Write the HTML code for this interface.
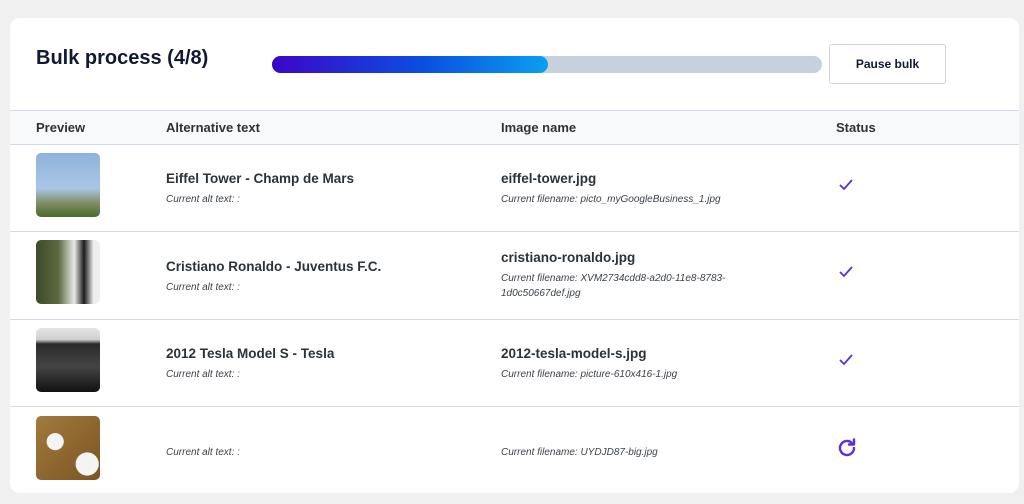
<!DOCTYPE html>
<html><head><style>
body{margin:0;width:1024px;height:504px;background:#f0f0f1;font-family:"Liberation Sans",Arial,sans-serif;position:relative;overflow:hidden;color:#1d2327}
.card{position:absolute;left:10px;top:18px;width:1009px;height:475px;background:#fff;border-radius:10px;overflow:hidden}
.a{position:absolute}
h1{position:absolute;left:26px;top:29px;margin:0;font-size:20px;font-weight:bold;color:#111a33}
.bar{left:262px;top:38px;width:550px;height:17px;border-radius:9px;background:#c7d0dd}
.fill{left:262px;top:38px;width:276px;height:17px;border-radius:9px;background:linear-gradient(90deg,#3b06c9,#0a4fe0 55%,#0aa0ee)}
.btn{left:819px;top:26px;width:115px;height:38px;border:1px solid #cfd6e1;border-radius:3px;font-size:12px;font-weight:bold;text-align:center;line-height:38px;color:#111a33}
.hl{left:0;width:1009px;height:1px;background:#d3dbea}
.head{left:0;top:92px;width:1009px;height:34px;background:#f8f9fb}
.th{top:102px;font-size:13px;font-weight:bold;color:#2c3338}
.t{font-size:13.5px;font-weight:bold;color:#2c3338}
.s{font-size:10px;font-style:italic;color:#3c434a;line-height:15px}
.img{left:26px;width:64px;height:64px;border-radius:5px}
</style></head><body>
<div class="card">
<h1>Bulk process (4/8)</h1>
<div class="a bar"></div><div class="a fill"></div>
<div class="a btn">Pause bulk</div>
<div class="a head"></div>
<div class="a hl" style="top:92px"></div>
<div class="a hl" style="top:126px"></div>
<div class="a th" style="left:26px">Preview</div>
<div class="a th" style="left:156px">Alternative text</div>
<div class="a th" style="left:491px">Image name</div>
<div class="a th" style="left:826px">Status</div>

<div class="a img" style="top:135px;background:linear-gradient(180deg,#8fb3dc 0%,#aac6e6 55%,#7c8a5a 80%,#4d6a2e 100%)"></div>
<div class="a t" style="left:156px;top:153px">Eiffel Tower - Champ de Mars</div>
<div class="a s" style="left:156px;top:174px">Current alt text: :</div>
<div class="a t" style="left:491px;top:153px">eiffel-tower.jpg</div>
<div class="a s" style="left:491px;top:174px">Current filename: picto_myGoogleBusiness_1.jpg</div>
<svg class="a" style="left:828px;top:160px" width="16" height="14" viewBox="0 0 16 14"><path d="M2 7l4 4 8-9" fill="none" stroke="#5b2ee0" stroke-width="1.8"/></svg>
<div class="a hl" style="top:213px"></div>

<div class="a img" style="top:222px;background:linear-gradient(90deg,#3e4a2a 0%,#5b6a3e 35%,#e8e8e8 60%,#1a1a1a 75%,#eee 90%)"></div>
<div class="a t" style="left:156px;top:241px">Cristiano Ronaldo - Juventus F.C.</div>
<div class="a s" style="left:156px;top:262px">Current alt text: :</div>
<div class="a t" style="left:491px;top:232px">cristiano-ronaldo.jpg</div>
<div class="a s" style="left:491px;top:253px">Current filename: XVM2734cdd8-a2d0-11e8-8783-<br>1d0c50667def.jpg</div>
<svg class="a" style="left:828px;top:247px" width="16" height="14" viewBox="0 0 16 14"><path d="M2 7l4 4 8-9" fill="none" stroke="#5b2ee0" stroke-width="1.8"/></svg>
<div class="a hl" style="top:301px"></div>

<div class="a img" style="top:310px;background:linear-gradient(180deg,#e4e4e4 0%,#d0d0d0 18%,#2a2a2a 25%,#444 60%,#111 100%)"></div>
<div class="a t" style="left:156px;top:328px">2012 Tesla Model S - Tesla</div>
<div class="a s" style="left:156px;top:349px">Current alt text: :</div>
<div class="a t" style="left:491px;top:328px">2012-tesla-model-s.jpg</div>
<div class="a s" style="left:491px;top:349px">Current filename: picture-610x416-1.jpg</div>
<svg class="a" style="left:828px;top:335px" width="16" height="14" viewBox="0 0 16 14"><path d="M2 7l4 4 8-9" fill="none" stroke="#5b2ee0" stroke-width="1.8"/></svg>
<div class="a hl" style="top:388px"></div>

<div class="a img" style="top:398px;background:radial-gradient(circle at 30% 40%,#f4f4f4 0 14%,transparent 15%),radial-gradient(circle at 80% 75%,#f4f4f4 0 16%,transparent 17%),linear-gradient(135deg,#a37a3c,#7a5524)"></div>
<div class="a s" style="left:156px;top:427px">Current alt text: :</div>
<div class="a s" style="left:491px;top:427px">Current filename: UYDJD87-big.jpg</div>
<svg class="a" style="left:825px;top:418px" width="24" height="24" viewBox="0 0 24 24"><path d="M19 12a7 7 0 1 1-2.2-5.1" fill="none" stroke="#5b2ee0" stroke-width="2.4" stroke-linecap="round"/><path d="M19 3.5v5h-5" fill="none" stroke="#5b2ee0" stroke-width="2.4" stroke-linecap="round" stroke-linejoin="round"/></svg>
</div>
</body></html>
